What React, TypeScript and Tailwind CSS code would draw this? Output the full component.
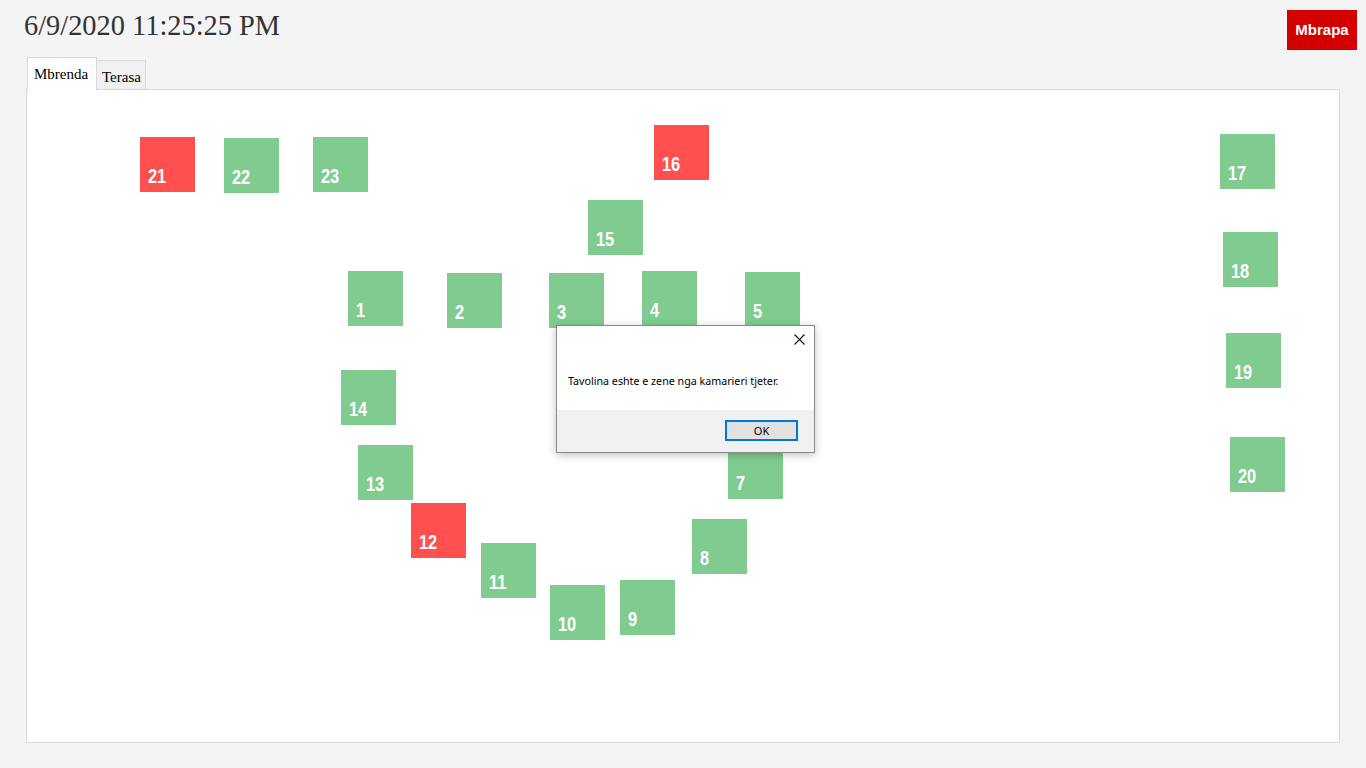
import React from 'react';

type Table = { n: number; x: number; y: number; busy?: boolean };

// positions are relative to the floor panel
const TABLES: Table[] = [
    { n: 21, x: 113, y: 47, busy: true },
    { n: 22, x: 197, y: 48 },
    { n: 23, x: 286, y: 47 },
    { n: 16, x: 627, y: 35, busy: true },
    { n: 15, x: 561, y: 110 },
    { n: 17, x: 1193, y: 44 },
    { n: 18, x: 1196, y: 142 },
    { n: 19, x: 1199, y: 243 },
    { n: 20, x: 1203, y: 347 },
    { n: 1, x: 321, y: 181 },
    { n: 2, x: 420, y: 183 },
    { n: 3, x: 522, y: 183 },
    { n: 4, x: 615, y: 181 },
    { n: 5, x: 718, y: 182 },
    { n: 6, x: 701, y: 280 },
    { n: 14, x: 314, y: 280 },
    { n: 13, x: 331, y: 355 },
    { n: 12, x: 384, y: 413, busy: true },
    { n: 11, x: 454, y: 453 },
    { n: 10, x: 523, y: 495 },
    { n: 9, x: 593, y: 490 },
    { n: 8, x: 665, y: 429 },
    { n: 7, x: 701, y: 354 },
];

function Tile({ t }: { t: Table }) {
    return (
        <div
            className={`absolute w-[55px] h-[55px] ${t.busy ? 'bg-[#ff4f4f]' : 'bg-[#80cc90]'}`}
            style={{ left: t.x, top: t.y }}
        >
            <span
                className="absolute left-[8px] bottom-[6px] origin-bottom-left scale-x-[0.82] text-white font-bold text-[20px] leading-none"
                style={{ fontFamily: '"Liberation Sans", Arial, sans-serif' }}
            >
                {t.n}
            </span>
        </div>
    );
}

export default function App() {
    return (
        <div className="relative w-[1366px] h-[768px] bg-[#f4f4f4] overflow-hidden">
            {/* Header */}
            <div className="flex items-start justify-between pl-[24px] pr-[9px] pt-[10px] h-[57px]">
                <h1
                    className="text-[28.4px] leading-[32px] text-[#333333]"
                    style={{ fontFamily: '"Liberation Serif", "Times New Roman", serif' }}
                >
                    6/9/2020 11:25:25 PM
                </h1>
                <button
                    className="w-[70px] h-[40px] bg-[#d40000] text-white font-bold text-[15px]"
                    style={{ fontFamily: '"Liberation Sans", Arial, sans-serif' }}
                >
                    Mbrapa
                </button>
            </div>

            {/* Tabs */}
            <div
                className="flex items-end pl-[27px] h-[33px] text-[15px] text-black"
                style={{ fontFamily: '"Liberation Serif", "Times New Roman", serif' }}
            >
                <div className="relative z-10 h-[33px] w-[70px] bg-white border border-b-0 border-[#d8d8d8] pl-[6px] pt-[5px]">
                    Mbrenda
                </div>
                <div className="h-[30px] w-[49px] bg-[#f0f0f0] border border-l-0 border-b-0 border-[#d8d8d8] pl-[5px] pt-[5px]">
                    Terasa
                </div>
            </div>

            {/* Floor */}
            <div className="relative ml-[26px] -mt-px w-[1314px] h-[654px] bg-white border border-[#d8d8d8]">
                {TABLES.map(t => (
                    <Tile key={t.n} t={t} />
                ))}
            </div>

            {/* Message box */}
            <div
                className="absolute left-[556px] top-[325px] w-[259px] h-[128px] bg-white border border-[#8a8a8a] shadow-[0_2px_8px_rgba(0,0,0,0.25)] flex flex-col"
                style={{ fontFamily: '"Noto Sans", "Liberation Sans", sans-serif' }}
            >
                <div className="relative h-[84px]">
                    <svg className="absolute left-[237px] top-[8px]" width="11" height="11" viewBox="0 0 11 11">
                        <path d="M0.5 0.5 L10.5 10.5 M10.5 0.5 L0.5 10.5" stroke="#111" strokeWidth="1.1" />
                    </svg>
                    <p className="absolute left-[11px] top-[48px] text-[10.7px] leading-[14px] text-black">
                        Tavolina eshte e zene nga kamarieri tjeter.
                    </p>
                </div>
                <div className="flex-1 bg-[#f0f0f0] flex items-start justify-end pr-[16px] pt-[10px]">
                    <button className="w-[73px] h-[21px] bg-[#e1e1e1] border-2 border-[#0078d7] text-[11px] leading-none text-black">
                        OK
                    </button>
                </div>
            </div>
        </div>
    );
}
